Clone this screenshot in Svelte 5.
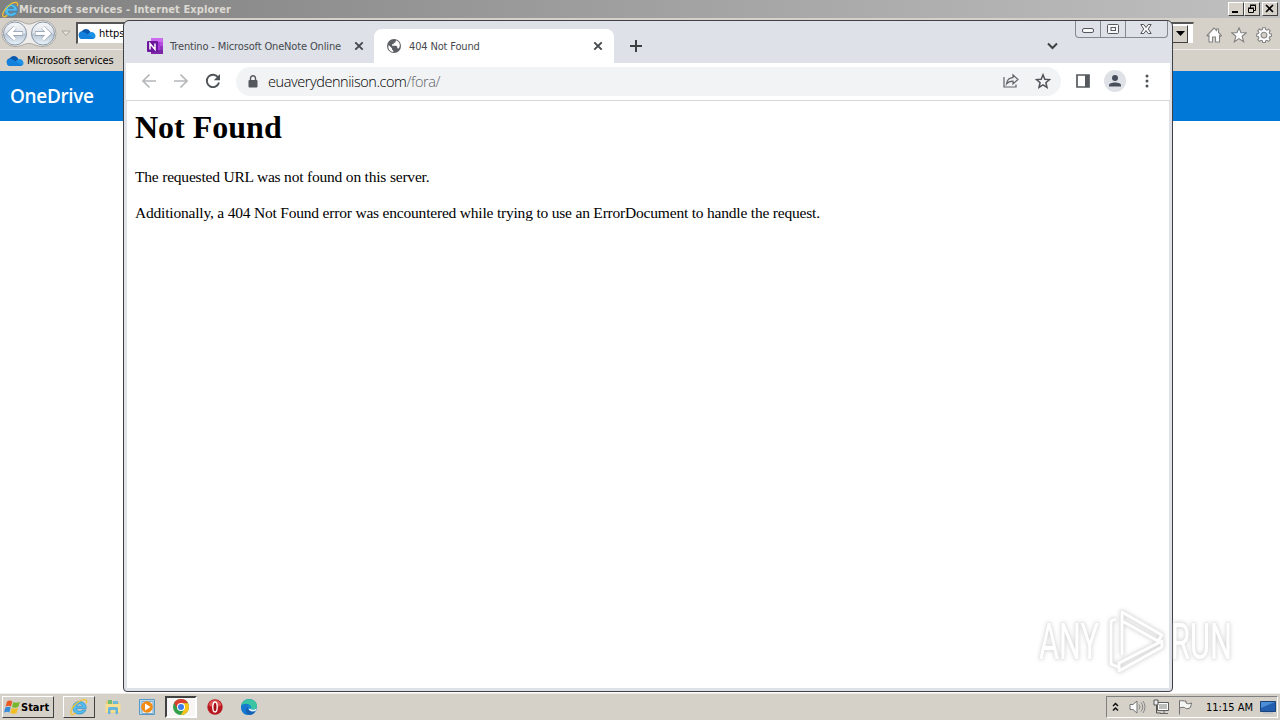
<script lang="ts">
  const chromeTabs = [
    { title: 'Trentino - Microsoft OneNote Online', icon: 'onenote', active: false },
    { title: '404 Not Found', icon: 'globe', active: true },
  ];

  const taskItems = ['ie', 'folder', 'media', 'chrome', 'opera', 'edge'];
</script>

{#snippet cloud()}
  <svg class="cloud" width="18" height="12" viewBox="0 0 18 12">
    <path d="M1.500 9.500C-.5 5.500 2 3.500 4 3.300 6 0 10.500 0 12.300 3.800L12 8z" fill="#0a57ae" />
    <path d="M6 10.500 11 5c2.500-2.500 6.500-.5 6.500 3 0 2-1.500 3-3 3z" fill="#1b92e6" />
    <path d="M1.300 9.500C-.8 5.500 3 2.500 6.500 4.300l9.500 6.200-1.500.5H4c-1.300 0-2.200-.5-2.700-1.500z" fill="#1380dc" />
  </svg>
{/snippet}

{#snippet ie(size: number)}
  <svg width={size} height={size} viewBox="0 0 18 18">
    <path fill-rule="evenodd" d="M16.200 10.600H6.500c.3 3.200 4.500 3.600 5.700 1.300h3.600C13.800 18 2.800 17.600 2.800 9.800c0-8.300 13.900-8.600 13.400.8zM6.600 8.200h5.800c-.3-3-5.300-3-5.800 0z" fill="#54bdf0" stroke="#1f85c2" stroke-width=".6" />
    <path d="M16.300 5.400C17.800.5 13.600.5 8.200 4 2.500 7.700-.5 14.500 1.300 16.300c1 .9 3-.1 4.400-1.200" fill="none" stroke="#f2c230" stroke-width="1.300" />
  </svg>
{/snippet}

{#snippet closeMark()}
  <svg width="10" height="10" viewBox="0 0 10 10">
    <path d="m1.300 1.300 7.400 7.400m0-7.400L1.300 8.700" stroke="#45494d" stroke-width="1.900" />
  </svg>
{/snippet}

<div class="desktop">
  <!-- Internet Explorer, behind -->
  <div class="ie">
    <div class="ie-title">
      {@render ie(17)}
      <span class="ie-name">Microsoft services - Internet Explorer</span>
      <div class="caption">
        <span><svg width="14" height="12"><path d="M3 9h6" stroke="#000" stroke-width="2" /></svg></span>
        <span><svg width="14" height="12"><path d="M5.500 5V2.500h5v5H9M5 2h6M3.500 5.500h5v4h-5zM3 5h6" stroke="#000" fill="none" /></svg></span>
        <span class="gap"><svg width="14" height="12"><path d="m3 2 7 7m0-7-7 7" stroke="#000" stroke-width="1.600" /></svg></span>
      </div>
    </div>
    <div class="ie-nav">
      <svg class="nav-pair" width="58" height="30" viewBox="0 0 58 30">
        <defs>
          <linearGradient id="orb" x2="0" y2="1">
            <stop offset="0" stop-color="#f7f8fa" />
            <stop offset=".48" stop-color="#dde3ea" />
            <stop offset=".52" stop-color="#b9c5d3" />
            <stop offset="1" stop-color="#e9f4fb" />
          </linearGradient>
        </defs>
        <path d="M15 1.500c7 0 9 3.500 14 3.500s7-3.500 14-3.500a13 13 0 0 1 0 26c-7 0-9-3-14-3s-7 3-14 3a13 13 0 0 1 0-26z" fill="#eeedeb" stroke="#aaa7a1" />
        <circle cx="15" cy="14.500" r="11.500" fill="url(#orb)" stroke="#8795a6" />
        <circle cx="43" cy="14.500" r="11.500" fill="url(#orb)" stroke="#8795a6" />
        <path d="M23 14.500H9m6-6-6 6 6 6M35 14.500h14m-6-6 6 6-6 6" fill="none" stroke="#8b99aa" stroke-width="4.400" />
        <path d="M22.500 14.500H9m6-6-6 6 6 6M35.500 14.500H49m-6-6 6 6-6 6" fill="none" stroke="#fff" stroke-width="3.200" />
      </svg>
      <svg class="drop" width="10" height="7"><path d="M1 1h8L5 5.500z" fill="#e8e5df" stroke="#aaa69e" /></svg>
      <div class="address">
        {@render cloud()}
        <span>https</span>
        <i class="select"><svg width="9" height="5"><path d="M0 0h9L4.500 5z" /></svg></i>
      </div>
      <div class="ie-tools">
        <svg width="16" height="16" viewBox="0 0 16 16"><path d="m1 8.500 7-7.500 2.500 2.500V2h2v3.500l3 3-1.200 1-.8-.7V15H9.500v-5h-3v5H3V8.500l-.8.800z" /></svg>
        <svg width="16" height="16" viewBox="0 0 16 16"><path d="m8 .8 2 5h5.300l-4.200 3.400 1.600 5.600L8 11.600l-4.700 3.200 1.600-5.600L.7 5.800H6z" /></svg>
        <svg width="16" height="16" viewBox="0 0 16 16"><path fill-rule="evenodd" d="M6.700.7h2.600l.4 2 1.200.5 1.700-1.100 1.600 1.700-1 1.700.5 1.200 1.700.3v2.400l-1.800.4-.5 1.200 1.100 1.700-1.700 1.700-1.700-1.100-1.100.5-.4 1.700H6.700l-.4-1.800-1.200-.4-1.700 1.100-1.600-1.700L2.900 11l-.5-1.200-1.700-.4V7l1.700-.4.5-1.200-1.100-1.700L3.500 2l1.600 1.100 1.200-.5zM8 5.200a2.900 2.900 0 1 0 0 5.800 2.900 2.900 0 0 0 0-5.800z" /></svg>
      </div>
    </div>
    <div class="ie-favorites">
      {@render cloud()}
      <span>Microsoft services</span>
    </div>
    <div class="onedrive">OneDrive</div>
  </div>

  <!-- Chrome window -->
  <div class="chrome">
    <div class="chrome-caption">
      <span><svg width="13" height="6"><rect x=".5" y=".5" width="11" height="4" rx="1.500" /></svg></span>
      <span><svg width="13" height="10"><rect x=".5" y=".5" width="11" height="9" rx="1" /><rect x="4" y="3.500" width="4.500" height="3" /></svg></span>
      <span class="wide"><svg width="13" height="11"><path d="M.8.500h3l2.200 3 2.200-3h3L8.300 5l2.900 4.500h-3L6 6.600 3.800 9.500h-3L3.700 5z" /></svg></span>
    </div>
    <div class="tabs">
      {#each chromeTabs as tab}
        <div class="tab" class:active={tab.active}>
          {#if tab.icon === 'onenote'}
            <svg width="16" height="16" viewBox="0 0 16 16">
              <path d="M4 0h12v16H4z" fill="#a83cda" />
              <path d="M4 0h12v4H4z" fill="#cb69ef" />
              <path d="M13 4h3v4h-3z" fill="#b64be3" />
              <path d="M13 8h3v4h-3z" fill="#9332bf" />
              <path d="M4 12h12v4H4z" fill="#7d25a7" />
              <rect y="3" width="11" height="11" rx="1" fill="#6b169d" />
              <path d="M3 11.500v-6l5 6v-6" fill="none" stroke="#fff" stroke-width="1.500" />
            </svg>
          {:else}
            <svg width="16" height="16" viewBox="0 0 16 16">
              <circle cx="8" cy="8" r="7" fill="#5b5f64" />
              <path d="M2.500 7 6 10.200v1.300l1.300 1.300V14C3.500 13.500 1.800 11 2.500 7zM10 2.300c3.800 1.400 5 5.500 2.600 8.200l-1.300-.3V8.500L10 7.700H6V6.200h1.700V4.700h1.500z" fill="#fff" />
            </svg>
          {/if}
          <span class="tab-title">{tab.title}</span>
          {@render closeMark()}
        </div>
      {/each}
      <svg class="plus" width="12" height="12"><path d="M6 0v12M0 6h12" stroke="#3c4043" stroke-width="2" /></svg>
      <svg class="chevron" width="11" height="8"><path d="m1 1.500 4.500 4.500L10 1.500" fill="none" stroke="#3c4043" stroke-width="2" /></svg>
    </div>
    <div class="toolbar">
      <svg width="16" height="16" viewBox="0 0 16 16"><path d="M15 8H2m6.500-6.500L2 8l6.500 6.500" fill="none" stroke="#b5b7ba" stroke-width="1.700" /></svg>
      <svg width="16" height="16" viewBox="0 0 16 16"><path d="M1 8h13M7.500 1.500 14 8l-6.500 6.500" fill="none" stroke="#b5b7ba" stroke-width="1.700" /></svg>
      <svg width="16" height="16" viewBox="0 0 16 16"><path d="M13.200 4.500A6.200 6.200 0 1 0 14 9.500" fill="none" stroke="#505459" stroke-width="1.900" /><path d="M15 1v6.300H8.800z" fill="#505459" /></svg>
      <div class="omnibox">
        <svg width="10" height="13" viewBox="0 0 10 13"><rect x=".5" y="5" width="9" height="7.500" rx="1" fill="#54585d" /><path d="M2.500 5.500V3.300a2.500 2.500 0 0 1 5 0v2.200" fill="none" stroke="#54585d" stroke-width="1.400" /></svg>
        <span class="url">euaverydenniison.com<em>/fora/</em></span>
        <svg class="share" width="16" height="16" viewBox="0 0 16 16"><path d="M1 4v10h12v-2.500M3.500 11C4 7 6.300 4.700 10 4.600V1.800l5 4.700-5 4.500V8.200C7 8.200 5 9 3.500 11z" fill="none" stroke="#5f6368" stroke-width="1.200" /></svg>
        <svg width="16" height="16" viewBox="0 0 16 16"><path d="m8 1.800 1.800 4.400 4.700.4-3.600 3.100 1.100 4.600L8 11.800l-4 2.500 1.100-4.600-3.600-3.100 4.700-.4z" fill="none" stroke="#505459" stroke-width="1.500" /></svg>
      </div>
      <svg class="panel" width="14" height="14"><path d="M1 1h12v12H1z" fill="none" stroke="#55595e" stroke-width="1.700" /><path d="M9 1h4v12H9z" fill="#55595e" /></svg>
      <svg class="avatar" width="22" height="22"><circle cx="11" cy="11" r="11" fill="#dee1e6" /><circle cx="11" cy="8" r="3" fill="#464e5b" /><path d="M5 16.500v-1.300C5 11.500 17 11.500 17 15.200v1.300z" fill="#464e5b" /></svg>
      <svg class="dots" width="4" height="14" fill="#505459"><circle cx="2" cy="2" r="1.500" /><circle cx="2" cy="7" r="1.500" /><circle cx="2" cy="12" r="1.500" /></svg>
    </div>
    <div class="page">
      <h1>Not Found</h1>
      <p>The requested URL was not found on this server.</p>
      <p class="extra">Additionally, a 404 Not Found error was encountered while trying to use an ErrorDocument to handle the request.</p>
    </div>
  </div>

  <!-- Taskbar -->
  <div class="taskbar">
    <div class="start">
      <svg width="17" height="17" viewBox="0 0 17 17">
        <path d="M3 2.500C5 1 7 1.500 8.300 2.500L7 7.500c-2-1-3.500-.9-5.500.2z" fill="#e95b26" />
        <path d="M9.300 3c2 1 4 1 6.500-.3l-1.500 5C12 9 10 8.800 8 8z" fill="#76b72e" />
        <path d="M1.200 8.800c2-1.200 3.700-1.200 5.500-.3l-1.400 5C3.500 12.500 2 12.600 0 13.700z" fill="#368bd8" />
        <path d="M7.700 9c2 1 4 1 6.300-.2l-1.400 5.100c-2.400 1.200-4.300 1-6.200.1z" fill="#f3be24" />
      </svg>
      <b>Start</b>
    </div>
    {#each taskItems as item}
      <div class="task" class:raised={item === 'ie'} class:pressed={item === 'chrome'}>
        {#if item === 'ie'}
          {@render ie(18)}
        {:else if item === 'folder'}
          <svg width="16" height="16" viewBox="0 0 16 16"><path d="M1 2h5l1 1.500h7V14H1z" fill="#e9cc70" /><path d="M3 1h4v4H3z" fill="#72bd72" /><path d="M8 2h5v3H8z" fill="#6bb8d9" /><path d="M.5 5h15v8.500H.5z" fill="#f7df91" /><path d="M3 15V9.500c0-1 1-1.500 2-1.500h6c1 0 2 .5 2 1.500V15h-2.500v-4h-5v4z" fill="#65b5dc" /></svg>
        {:else if item === 'media'}
          <svg width="16" height="16" viewBox="0 0 16 16"><path d="M.5.500h15v15H.5z" fill="#b9d8ee" stroke="#5799c5" /><path d="M3 2.500h11v12H3z" fill="#e7f1f8" stroke="#7eaac7" /><circle cx="8" cy="8" r="5.800" fill="#f38a14" /><path d="m6 4.500 5.500 3.500L6 11.500z" fill="#fff" /></svg>
        {:else if item === 'chrome'}
          <svg width="16" height="16" viewBox="0 0 16 16"><circle cx="8" cy="8" r="8" fill="#34a04b" /><path d="M1.100 4A8 8 0 0 1 15 4.200H8L4.700 10z" fill="#dc3e30" /><path d="M8 4.200h7A8 8 0 0 1 7.800 16l3.600-6z" fill="#fbc419" /><circle cx="8" cy="8" r="4" fill="#fff" /><circle cx="8" cy="8" r="3" fill="#3d7ee8" /></svg>
        {:else if item === 'opera'}
          <svg width="16" height="16" viewBox="0 0 16 16"><circle cx="8" cy="8" r="7.700" fill="#b81920" /><path d="M1.500 6a6.800 6.800 0 0 1 13 0C12 8.500 4 8.500 1.500 6z" fill="#df5555" /><ellipse cx="8" cy="8" rx="2.200" ry="5" fill="#a50e16" stroke="#fff" stroke-width="1.400" /></svg>
        {:else}
          <svg width="16" height="16" viewBox="0 0 16 16"><circle cx="8" cy="8" r="8" fill="#1688d2" /><path d="M.2 7C1.500-2.500 15.500-1.500 16 6.500c.2 4-4 5-6.500 3.500 1.300-1.500.8-4-2-4.500C4.500 5 1.500 5.500.2 7z" fill="#39c5a1" /><path d="M.1 7C2 4.500 5.500 4 8 5.500 5 7 4.800 12 9 14.500c-4 3.500-9.500-1-8.900-7.500z" fill="#1679cf" /><path d="M7 7.500c-1 3.500 3 6 7.500 4.500A8 8 0 0 1 9 16C4.500 15 3.500 10 7 7.500z" fill="#1660b4" /><path d="M9.300 9.800c2 1.500 5 .8 6.500-.8l-1 2.700c-3 1.300-6.500.8-7.300-2z" fill="#e5f2f5" /></svg>
        {/if}
      </div>
    {/each}
    <div class="tray">
      <svg width="8" height="10"><path d="m1 4 2.500-2.500L6 4M1 8.500 3.500 6 6 8.500" fill="none" stroke="#111" stroke-width="1.500" /></svg>
      <svg class="speaker" width="17" height="16" viewBox="0 0 17 16"><path d="M1 5.500h3L8 2v12l-4-3.500H1z" fill="#fafafa" stroke="#777" /><path d="M10 5.500q2 2.500 0 5M12 3.500q3.500 4.500 0 9M14 2q4 6 0 12" fill="none" stroke="#888" /></svg>
      <svg class="network" width="17" height="16" viewBox="0 0 17 16"><path d="M4.500 3.500h11v8h-11z" fill="#bdbdb9" stroke="#5f5f5f" /><path d="M5.500 4.500h9v6h-9z" fill="none" stroke="#fff" /><path d="M7 14.500h8M11 12v2" stroke="#666" /><path d="M1 1h4v5H1z" fill="#eee" stroke="#555" /><path d="M3.500 6v8h4" fill="none" stroke="#555" /></svg>
      <svg class="flag" width="17" height="16" viewBox="0 0 17 16"><path d="M2.500 1.500v14M2.500 2c3-1 4 .5 6.500 0v2c2 1 3 1 5.500 0-.3 2-.8 4-1.700 5C10 10 9 10 7.500 8.500c-2-.5-3 0-5 .5z" fill="#f5f5f3" stroke="#707070" /></svg>
      <span>11:15 AM</span>
      <svg class="show" width="16" height="13" viewBox="0 0 16 13"><path d="M.5.500h15v10H.5z" fill="#245eae" stroke="#184477" /><path d="M1 1h14L1 7z" fill="#4d8ed8" /><path d="M3 12h10" stroke="#a8b6c5" /></svg>
    </div>
  </div>

  <!-- Watermark over everything -->
  <svg class="watermark" width="220" height="76" viewBox="0 0 220 76">
    <g fill="#fff" stroke="#dcdcdc" stroke-width="1" paint-order="stroke">
      <text x="6" y="53" textLength="60" lengthAdjust="spacingAndGlyphs">ANY</text>
      <text x="138" y="53" textLength="61" lengthAdjust="spacingAndGlyphs">RUN</text>
    </g>
    <g fill="none" stroke-linejoin="round">
      <path d="M83 13l-5 2v43l7 3M89 49V6l40 23-4 6-36-20M86 57l43-22v6L86 65z" stroke="#dedede" stroke-width="4" />
      <path d="M83 13l-5 2v43l7 3M89 49V6l40 23-4 6-36-20M86 57l43-22v6L86 65z" stroke="#fff" stroke-width="2.600" />
    </g>
  </svg>
</div>

<style>
  :global(body) {
    margin: 0;
    overflow: hidden;
  }

  .desktop {
    position: relative;
    display: flex;
    flex-direction: column;
    width: 1280px;
    height: 720px;
    background: #fff;
    font-family: "DejaVu Sans Condensed", "DejaVu Sans", sans-serif;
    font-stretch: condensed;
    font-size: 11px;
    color: #000;
  }
  .desktop * {
    box-sizing: border-box;
  }
  svg {
    display: block;
    flex: none;
  }
  span {
    white-space: nowrap;
  }

  .ie {
    height: 693px;
  }
  .ie-title {
    display: flex;
    align-items: center;
    height: 18px;
    padding: 0 2px;
    background: linear-gradient(90deg, #808080, #c0c0c0);
  }
  .ie-name {
    color: #dcd9d2;
    font-weight: bold;
    font-size: 11px;
    letter-spacing: 0.09px;
  }
  .caption {
    display: flex;
    margin-left: auto;
  }
  .caption span {
    width: 16px;
    height: 14px;
    background: #d6d2ca;
    border: 1px solid;
    border-color: #fff #404040 #404040 #fff;
  }
  .caption .gap {
    margin-left: 2px;
  }
  .ie-nav {
    display: flex;
    align-items: center;
    height: 31px;
    background: #d5d0c8;
  }
  .nav-pair {
    margin-top: 1px;
  }
  .drop {
    margin-left: 3px;
  }
  .address {
    display: flex;
    align-items: center;
    width: 1118px;
    height: 22px;
    margin: 0 0 1px 5px;
    padding: 0 5px 0 0;
    background: #fff;
    border: 1px solid #d5d0c8;
    border-top: 2px solid #555;
    border-left: 2px solid #555;
  }
  .address span {
    margin-left: 3px;
  }
  .select {
    display: grid;
    place-items: center;
    width: 16px;
    height: 18px;
    margin-left: auto;
    background: #d5d0c8;
    border: 1px solid;
    border-color: #fff #404040 #404040 #fff;
  }
  .ie-tools {
    display: flex;
    gap: 9px;
    margin: 3px 8px 0 auto;
  }
  .ie-tools path {
    fill: #fff;
    stroke: #858585;
    stroke-width: 1.1;
  }
  .ie-favorites {
    display: flex;
    align-items: center;
    height: 22px;
    padding-left: 6px;
    background: #d5d0c8;
    border-top: 1px solid #efede9;
  }
  .ie-favorites span {
    margin-left: 3px;
    letter-spacing: -0.12px;
  }
  .onedrive {
    height: 50px;
    padding-left: 10px;
    background: #0078d7;
    color: #fff;
    font: 600 19px/50px "Open Sans", sans-serif;
    letter-spacing: -0.35px;
  }

  .chrome {
    position: absolute;
    top: 20px;
    left: 123px;
    display: flex;
    flex-direction: column;
    width: 1050px;
    height: 672px;
    padding: 0 3px;
    background: #dee1e8;
    border: 1px solid #3f4144;
    border-radius: 6px 6px 4px 4px;
  }
  .chrome-caption {
    position: absolute;
    top: 0;
    right: 4px;
    display: flex;
    height: 17px;
    border: 1px solid #85898f;
    border-top: 0;
    border-radius: 0 0 4px 4px;
  }
  .chrome-caption span {
    display: grid;
    place-items: center;
    width: 25px;
    border-right: 1px solid #85898f;
  }
  .chrome-caption span:first-child {
    padding-top: 4px;
  }
  .chrome-caption .wide {
    width: 41px;
    border: 0;
  }
  .chrome-caption svg {
    fill: #f7f8f9;
    stroke: #54575c;
  }
  .tabs {
    display: flex;
    align-items: center;
    height: 42px;
    padding: 8px 0 0 7px;
  }
  .tab {
    display: flex;
    align-items: center;
    width: 240px;
    height: 34px;
    padding: 0 11px 0 12px;
    color: #45494d;
  }
  .tab:first-child {
    padding-right: 10px;
    padding-left: 13px;
  }
  .tab.active {
    background: #fff;
    border-radius: 8px 8px 0 0;
  }
  .tab-title {
    flex: 1;
    margin-left: 7px;
    letter-spacing: -0.15px;
  }
  .plus {
    margin-left: 16px;
  }
  .chevron {
    margin-right: 111px;
    margin-left: auto;
  }
  .toolbar {
    display: flex;
    align-items: center;
    gap: 16px;
    height: 38px;
    margin: 0 -1px 0 -1px;
    padding: 0 0 1px 15px;
    background: #fff;
    border-bottom: 1px solid #d5d6d8;
  }
  .omnibox {
    display: flex;
    align-items: center;
    width: 825px;
    height: 29px;
    margin-left: -1px;
    padding: 0 10px 0 12px;
    background: #f1f3f4;
    border-radius: 15px;
  }
  .url {
    flex: 1;
    margin-left: 10px;
    font-family: "Open Sans", "Noto Sans", sans-serif;
    font-size: 14.5px;
    font-weight: 350;
    font-stretch: normal;
    letter-spacing: -0.42px;
    color: #000;
  }
  .url em {
    color: #5f6368;
    font-style: normal;
  }
  .share {
    margin-right: 16px;
  }
  .panel {
    margin-left: -1px;
  }
  .avatar {
    margin-left: -2px;
  }
  .dots {
    margin-left: 3px;
  }
  .page {
    flex: 1;
    margin-bottom: 3px;
    padding: 9px 8px 0;
    background: #fff;
    font-family: "Liberation Serif", serif;
    font-size: 15.5px;
    letter-spacing: -0.2px;
  }
  h1 {
    margin: 0;
    font-size: 32px;
    line-height: 34px;
    letter-spacing: 0;
  }
  p {
    margin: 24px 0 0;
    line-height: 18px;
  }
  .extra {
    margin-top: 18px;
  }

  .taskbar {
    display: flex;
    align-items: center;
    height: 27px;
    padding: 0 2px;
    background: #d5d0c8;
    border-top: 1px solid #efede9;
  }
  .start {
    display: flex;
    align-items: center;
    width: 52px;
    height: 22px;
    margin-right: 9px;
    padding-left: 1px;
    border: 1px solid;
    border-color: #fff #404040 #404040 #fff;
  }
  .task {
    display: grid;
    place-items: center;
    width: 32px;
    height: 22px;
    margin-right: 2px;
    border: 1px solid transparent;
  }
  .raised {
    border-color: #fff #404040 #404040 #fff;
  }
  .pressed {
    background: #f7f6f4;
    border: 2px solid;
    border-color: #404040 #fff #fff #404040;
  }
  .tray {
    display: flex;
    align-items: center;
    width: 172px;
    height: 22px;
    margin-left: auto;
    padding-left: 5px;
    border: 1px solid;
    border-color: #808080 #fff #fff #808080;
  }
  .speaker {
    margin-left: 9px;
  }
  .network {
    margin-left: 7px;
  }
  .flag {
    margin-left: 7px;
  }
  .tray span {
    margin-left: 12px;
  }
  .show {
    margin-right: 1px;
    margin-left: auto;
  }

  .watermark {
    position: absolute;
    top: 606px;
    left: 1033px;
    overflow: visible;
    font: 400 50px Roboto, sans-serif;
    opacity: 0.72;
    filter: drop-shadow(0 0 2px #bbb);
  }
</style>
